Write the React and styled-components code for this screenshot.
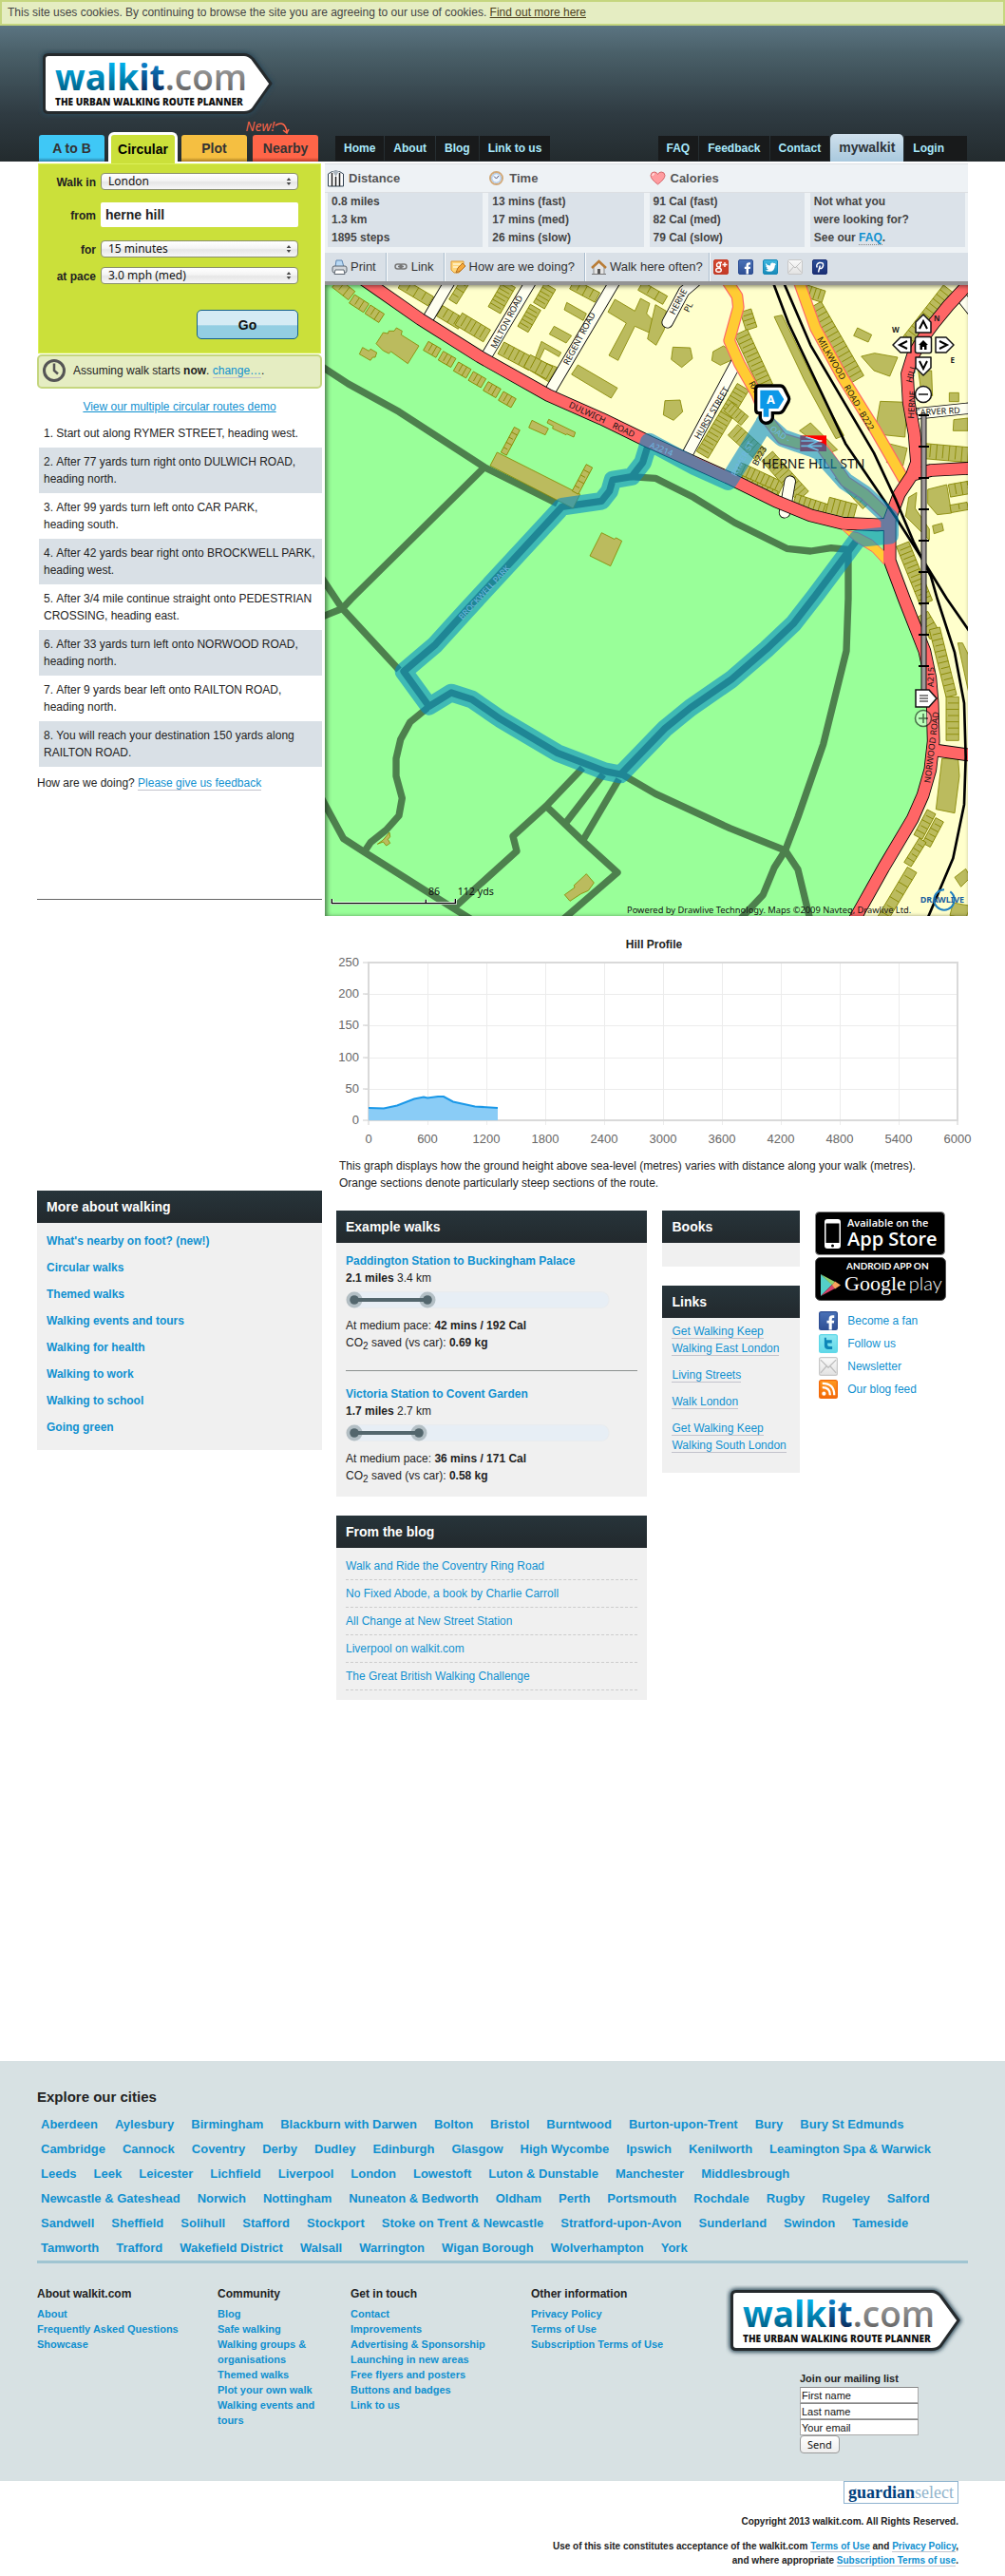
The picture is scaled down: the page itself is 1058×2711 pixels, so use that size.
import React from "react";
import styled, { createGlobalStyle, css } from "styled-components";

const sans = '"Liberation Sans", Arial, Helvetica, sans-serif';
const ui = '"Noto Sans", "Open Sans", sans-serif';
const blue = "#0f90d0";

const GlobalStyle = createGlobalStyle`
  *, *::before, *::after { box-sizing: border-box; }
  body { margin: 0; background: #fff; color: #222; font: 12px/18px ${sans}; }
  h2, h3, p, ul, ol { margin: 0; padding: 0; }
  ul, ol { list-style: none; }
  a { color: ${blue}; text-decoration: none; }
  svg { display: block; }
`;

const Container = styled.div`
  max-width: 980px;
  margin: 0 auto;
  @media (max-width: 1020px) { margin: 0 20px; }
`;

/* ---------- header ---------- */

const CookieBar = styled.p`
  padding: 2px 6px 3px;
  border: 2px solid #c5d67f;
  background: #e5edc2;
  color: #444;
  a { color: #4d3f1c; text-decoration: underline; }
`;

const Header = styled.header`
  background: linear-gradient(#5b7481, #4a6069 20%, #2f3b42 65%, #232b2e);
`;

const LogoLink = styled.a`
  display: block;
  width: 252px;
  margin-left: ${(p) => (p.$inset ? "1px" : "0")};
`;

const HeaderInner = styled(Container)`
  display: flex;
  flex-direction: column;
  padding-top: 24px;
`;

const NavRow = styled.div`
  display: flex;
  align-items: flex-end;
  justify-content: space-between;
  margin-top: 9px;
  height: 34px;
`;

const Tabs = styled.nav`
  position: relative;
  display: flex;
  align-items: flex-end;
  gap: 6px;
  width: 314px;
  padding-left: 2px;
`;

const Tab = styled.a`
  width: 69px;
  height: 28px;
  border-radius: 3px 3px 0 0;
  background: linear-gradient(${(p) => p.$color} 85%, ${(p) => p.$edge});
  color: #333;
  font: bold 14px/28px ${sans};
  text-align: center;
  ${(p) =>
    p.$active &&
    css`
      width: 73px;
      height: 33px;
      margin: 0 -2px -2px;
      position: relative;
      border: 3px solid #fff;
      border-bottom: 0;
      border-radius: 6px 6px 0 0;
      background: #cbe03a;
      color: #000;
      line-height: 30px;
    `}
`;

const NewNote = styled.span`
  position: absolute;
  right: 48px;
  bottom: 28px;
  display: flex;
  align-items: flex-end;
  color: #ff6548;
  font: italic 14px/18px "Open Sans", sans-serif;
`;

const MenuGroup = styled.nav`
  display: flex;
  align-items: flex-end;
  gap: 1px;
  margin-right: ${(p) => (p.$last ? "1px" : "auto")};
  margin-bottom: 1px;
`;

const MenuLink = styled.a`
  height: 26px;
  padding: 0 9px;
  background: #181a1b;
  color: #a9e9fb;
  font: bold 12px/26px ${sans};
  ${(p) => p.$wide && "padding-right: 24px;"}
`;

const AccountTab = styled.a`
  height: 29px;
  margin-bottom: -1px;
  padding: 0 9px;
  border-radius: 5px 5px 0 0;
  background: linear-gradient(#cfe0ec, #a9c9de);
  color: #2c3338;
  font: bold 14px/29px ${sans};
`;

/* ---------- main ---------- */

const Main = styled(Container)`
  display: grid;
  grid-template-columns: 300px minmax(0, 1fr);
  gap: 3px;
  padding: 2px 0 380px;
  @media (max-width: 760px) { grid-template-columns: minmax(0, 1fr); }
`;

const SearchForm = styled.form`
  display: grid;
  grid-template-columns: 60px 208px;
  column-gap: 5px;
  margin: 0 1px;
  padding: 9px 0 14px;
  border: 1px solid #dcf15a;
  background: #cbe03a;
  height: 200px;
  align-content: start;
`;

const FieldLabel = styled.label`
  height: ${(p) => p.$h};
  text-align: right;
  font-weight: bold;
  line-height: 20px;
  padding-top: ${(p) => p.$pad || "0"};
`;

const SelectWrap = styled.span`
  position: relative;
  height: 18px;
  svg { position: absolute; right: 6px; top: 4px; pointer-events: none; }
`;

const Select = styled.select`
  appearance: none;
  width: 100%;
  height: 18px;
  padding: 0 7px;
  border: 1px solid #8a8f6a;
  border-radius: 4px;
  background: linear-gradient(#fff, #f4f4f4 45%, #e6e6e6 55%, #f7f7f7);
  color: #111;
  font: 12px/16px ${ui};
`;

const PlaceInput = styled.input`
  width: 100%;
  height: 26px;
  margin: 0;
  padding: 0 5px;
  border: 0;
  border-radius: 2px;
  background: #fff;
  color: #222;
  font: bold 14px/26px ${sans};
`;

const GoButton = styled.button`
  grid-column: 2;
  justify-self: end;
  width: 107px;
  height: 31px;
  border: 1px solid #14608c;
  border-radius: 5px;
  background: linear-gradient(#d5ebf4 50%, #93cee2 55%, #93cee2);
  color: #111;
  font: bold 14px/28px ${sans};
`;

const TimeBar = styled.p`
  display: flex;
  align-items: center;
  gap: 8px;
  height: 36px;
  margin-top: 1px;
  padding: 0 4px 2px;
  border: 2px solid #c5d67f;
  border-radius: 5px;
  background: #e5edc2;
`;

const InlineLink = styled.a`
  border-bottom: 1px ${(p) => (p.$dotted ? "dotted #888" : "solid #c3c3cc")};
`;

const DemoLink = styled.p`
  margin-top: 10px;
  text-align: center;
  a { text-decoration: underline; }
`;

const Directions = styled.ol`
  margin: 4px 0 0 2px;
  list-style: decimal inside;
`;

const Step = styled.li`
  padding: 6px 0 6px 5px;
  background: ${(p) => (p.$alt ? "#d9e0e6" : "transparent")};
`;

const FeedbackLine = styled.p`
  padding-bottom: 113px;
  margin-top: 8px;
  border-bottom: 1px solid #666;
`;

const Panel = styled.section`
  margin-top: ${(p) => p.$top || "0"};
  background: #f0f0f0;
`;

const PanelTitle = styled.h2`
  padding: 0 10px;
  background: linear-gradient(#27343a, #22292d);
  color: #fff;
  font: bold 14px/34px ${sans};
`;

const PanelBody = styled.div`
  padding: ${(p) => p.$pad};
`;

const TopicList = styled.ul`
  font-weight: bold;
  li { height: 28px; line-height: 18px; }
`;

const StatsTable = styled.table`
  width: 100%;
  table-layout: fixed;
  border-collapse: separate;
  border-spacing: 0;
  border-bottom: 6px solid #eef2f5;
  background: #eef2f5;
  color: #444;
  font-weight: bold;
`;

const StatHead = styled.th`
  height: 31px;
  padding: 0 3px;
  border: solid #dcdfe2;
  border-width: 1px 0;
  text-align: left;
  font-size: 13px;
  color: #555;
  span { display: flex; align-items: center; gap: 5px; }
`;

const StatCell = styled.td`
  height: 19px;
  padding: 0 4px;
  border: solid #eef2f5;
  border-width: 0 3px;
  background: #dbe2e9;
  line-height: 19px;
`;

const Toolbar = styled.div`
  display: flex;
  align-items: center;
  height: 34px;
  padding-left: 1px;
  border-bottom: 4px solid #939393;
  background: #d9e0e7;
  font-size: 13px;
`;

const Tool = styled.a`
  display: flex;
  align-items: center;
  gap: 3px;
  height: 30px;
  padding: 0 ${(p) => p.$right || "10px"} 0 6px;
  border-right: 1px solid #a9bccd;
  box-shadow: 1px 0 #fff;
  color: #333;
`;

const ShareLinks = styled.div`
  display: flex;
  gap: 10px;
  padding-left: 4px;
`;

/* ---------- map ---------- */

const MapFrame = styled.div`
  position: relative;
  overflow: hidden;
  &::after {
    content: "";
    position: absolute;
    inset: 0;
    box-shadow: inset 2px 1px 5px rgba(0, 0, 0, 0.55);
    pointer-events: none;
  }
`;

const MapControls = styled.div`
  position: absolute;
  top: 30px;
  right: 14px;
  width: 66px;
  display: flex;
  flex-direction: column;
  align-items: center;
  z-index: 1;
`;

const Compass = styled.div`
  display: grid;
  grid-template-columns: repeat(3, 22px);
  grid-template-rows: repeat(3, 22px);
  margin-bottom: 8px;
  font: bold 8px/10px ${ui};
`;

const MapButton = styled.button`
  padding: 0;
  border: 0;
  background: none;
  width: 22px;
  height: 22px;
  ${(p) => p.$area && `grid-area: ${p.$area};`}
`;

const CompassMark = styled.span`
  grid-area: ${(p) => p.$area};
  justify-self: ${(p) => p.$x};
  align-self: ${(p) => p.$y};
`;

const ZoomTrack = styled.div`
  position: relative;
  margin: 9px 0 0 5px;
  input {
    position: absolute;
    inset: 0;
    width: 24px;
    height: 310px;
    margin: 0;
    opacity: 0;
    writing-mode: vertical-lr;
  }
`;

/* ---------- right column ---------- */

const ChartTitle = styled.h2`
  margin: 21px 0 1px 16px;
  text-align: center;
  font: bold 12px/18px ${sans};
`;

const ChartSvg = styled.svg`
  width: 100%;
  overflow: visible;
`;

const ChartNote = styled.p`
  padding: 10px 0 0 15px;
`;

const LowerGrid = styled.div`
  display: grid;
  grid-template-columns: minmax(0, 328fr) minmax(0, 145fr) minmax(0, 161fr);
  gap: 16px;
  margin: 20px 0 0 12px;
  align-items: start;
`;

const Walk = styled.div`
  & + & { margin-top: 20px; padding-top: 15px; border-top: 1px solid #8b908f; }
  svg { margin: 5px 0 9px; }
  sub { font-size: 10px; line-height: 0; }
`;

const BlogList = styled.ul`
  li { height: 29px; padding-top: 5px; border-bottom: 1px dashed #ccc; }
`;

const LinkList = styled.ul`
  display: grid;
  gap: 10px;
`;

const Badges = styled.div`
  display: grid;
  gap: 2px;
  padding-top: 1px;
  width: 138px;
`;

const SocialList = styled.ul`
  display: grid;
  gap: 4px;
  margin: 11px 0 0 4px;
  a { display: flex; align-items: center; gap: 10px; height: 20px; }
`;

/* ---------- footer ---------- */

const FooterBand = styled.footer`
  background: #d7e1e3;
  padding: 29px 0 29px;
  a { font-weight: bold; }
`;

const CitiesTitle = styled.h2`
  margin-bottom: 7px;
  font: bold 15px/18px ${sans};
`;

const CityRow = styled.ul`
  display: flex;
  flex-wrap: wrap;
  column-gap: 18px;
  padding-left: 4px;
  font-size: 13px;
  line-height: 26px;
`;

const FooterGrid = styled.div`
  display: grid;
  grid-template-columns: 190px 140px 190px 205px minmax(0, 1fr);
  border-top: 3px solid #a0c5d2;
  padding-top: 23px;
  @media (max-width: 900px) { grid-template-columns: repeat(auto-fill, minmax(190px, 1fr)); }
`;

const FooterColumn = styled.div`
  padding-right: 24px;
  font-size: 11px;
  line-height: 16px;
  white-space: ${(p) => (p.$wrap ? "normal" : "nowrap")};
  h3 { margin-bottom: 4px; font: bold 12px/18px ${sans}; }
`;

const MailForm = styled.form`
  display: flex;
  flex-direction: column;
  align-items: flex-start;
  margin: 13px 0 0 78px;
  h3 { font: bold 11px/18px ${sans}; }
`;

const MailInput = styled.input`
  width: 125px;
  height: 17px;
  margin: 0;
  padding: 0 1px;
  border: 1px solid #aaa;
  border-top-color: #888;
  background: #fff;
  color: #111;
  font: 11px/15px ${sans};
`;

const SendButton = styled.button`
  height: 19px;
  padding: 0 7px;
  border: 1px solid #999;
  border-radius: 4px;
  background: linear-gradient(#fff, #eee);
  color: #111;
  font: 11px/16px ${ui};
`;

const Legal = styled(Container)`
  display: flex;
  flex-direction: column;
  align-items: flex-end;
  padding: 0 10px 8px 0;
  text-align: right;
  font: bold 10px/15px ${sans};
  p { margin-top: 11px; }
`;

const Guardian = styled.a`
  padding: 0 4px;
  border: 1px solid #8fb3cf;
  color: #00407c;
  font: bold 18px/22px "Liberation Serif", serif;
  span { color: #92b4cc; font-weight: normal; }
`;

/* ---------- drawings ---------- */

function Logo({ id }) {
  const stops = (name, a, b) => (
    <linearGradient id={id + name} gradientUnits="userSpaceOnUse" x1="0" y1="14" x2="0" y2="45">
      <stop offset="0" stopColor={a} />
      <stop offset="1" stopColor={b} />
    </linearGradient>
  );
  const shape = "M11 6.500H217C221 6.500 223 8 226 11L245 37L226 64C223 67 221 67.500 217 67.500H11Q6.500 67.500 6.500 63V11Q6.500 6.500 11 6.500Z";
  return (
    <svg width="252" height="76" viewBox="0 0 252 76" role="img" aria-label="walkit.com">
      <defs>
        {stops("a", "#00b4f0", "#005f86")}
        {stops("b", "#0a84cf", "#0a2c5c")}
        {stops("c", "#a8a8a8", "#666")}
        <filter id={id + "s"} x="-10%" y="-20%" width="120%" height="140%">
          <feGaussianBlur stdDeviation="2" />
        </filter>
      </defs>
      <path d={shape} fill="none" stroke="#2c4656" strokeWidth="6" filter={`url(#${id}s)`} />
      <path d={shape} fill="#fff" stroke="#252a2d" strokeWidth="3" strokeLinejoin="round" />
      <text x="18" y="44" fontFamily="Open Sans, sans-serif" fontWeight="700" fontSize="37">
        <tspan fill={`url(#${id}a)`}>walk</tspan>
        <tspan fill={`url(#${id}b)`}>it</tspan>
        <tspan fill={`url(#${id}c)`} fontWeight="600">.com</tspan>
      </text>
      <text x="18" y="60" fontFamily="Open Sans, sans-serif" fontWeight="800" fontSize="10" fill="#111">
        THE URBAN WALKING ROUTE PLANNER
      </text>
    </svg>
  );
}

const tiles = {
  google: ["#d6492f", "#c33a26"],
  facebook: ["#4a72b8", "#2f4f94"],
  twitter: ["#3fb8e0", "#1789b8"],
  tlight: ["#8fe8f2", "#5fd8e8"],
  mail: ["#fafafa", "#e2e2e2"],
  pin: ["#2a4f98", "#1b2f74"],
  rss: ["#ff9a1f", "#f36a0a"],
};

function SocialIcon({ kind, size = 16 }) {
  const [a, b] = tiles[kind];
  const id = `tile-${kind}-${size}`;
  return (
    <svg width={size} height={size} viewBox="0 0 16 16" aria-hidden="true">
      <linearGradient id={id} x1="0" y1="0" x2="0" y2="1">
        <stop stopColor={a} />
        <stop offset="1" stopColor={b} />
      </linearGradient>
      <rect x=".5" y=".5" width="15" height="15" rx="1.500" fill={`url(#${id})`} stroke={kind === "mail" ? "#c8c8c8" : b} />
      {kind === "google" && (
        <g fill="none" stroke="#fff" strokeWidth="1.400">
          <ellipse cx="5.500" cy="5.800" rx="2" ry="2.200" />
          <path d="M5 3.300H9M7.300 7.500L6.500 9" />
          <ellipse cx="5.500" cy="11.200" rx="2.800" ry="2" />
          <path d="M12 3V8M9.500 5.500H14.500" />
        </g>
      )}
      {kind === "facebook" && <path d="M8.500 15.500V10H6.800V7.800H8.500V6.300Q8.500 3.300 11.500 3.300H13V5.600H12Q11 5.600 11 6.600V7.800H13L12.700 10H11V15.500Z" fill="#fff" />}
      {kind === "twitter" && <path d="M3 4Q5 6.500 8 6.500Q7.800 3.500 10.300 3.400Q11.300 3.400 12 4.200L13.600 3.700L13 5.100L14 5L12.800 6.400Q12.600 12.600 7 12.800Q4.500 12.800 2.700 11.600Q4.800 11.600 6 10.600Q4.400 10.200 3.900 8.900H5Q3.300 8.200 3.200 6.600L4.200 6.900Q2.700 5.500 3 4Z" fill="#fff" />}
      {kind === "tlight" && <path d="M6.300 3V5H11V7.600H7.300V9.200Q7.300 10.300 8.600 10.300H11.300V12.800H8Q4.700 12.800 4.700 9.500V3Z" fill="#0c86b8" />}
      {kind === "mail" && <path d="M1.500 2.500L8 9L14.500 2.500M1.500 13.500L6.300 8M14.500 13.500L9.700 8" fill="none" stroke="#bdbdbd" />}
      {kind === "pin" && <path d="M6.500 13.500L8.300 6.500M5.200 8.500Q3.700 5 7.500 3.500Q12 2.800 11.600 6.500Q10.700 10.200 7.700 9.200" fill="none" stroke="#fff" strokeWidth="1.500" />}
      {kind === "rss" && (
        <g fill="none" stroke="#fff" strokeWidth="1.800">
          <path d="M3 6.500Q9.500 6.500 9.500 13M3 3Q13 3 13 13" />
          <circle cx="4.300" cy="11.700" r=".8" fill="#fff" />
        </g>
      )}
    </svg>
  );
}

const PrintIcon = () => (
  <svg width="17" height="17" viewBox="0 0 17 17" aria-hidden="true">
    <path d="M4 8L5 1H11L13 8Z" fill="#b9d9f5" stroke="#5d85b0" />
    <rect x="1" y="7" width="15" height="7" rx="2" fill="#d3d7dc" stroke="#5d6670" />
    <path d="M4 11H13L14 15.500H3Z" fill="#fff" stroke="#5d6670" />
  </svg>
);
const ChainIcon = () => (
  <svg width="17" height="10" viewBox="0 0 17 10" fill="none" stroke="#777" strokeWidth="1.500" aria-hidden="true">
    <rect x="3" y="2" width="7" height="5" rx="2.500" />
    <rect x="8" y="2" width="7" height="5" rx="2.500" />
    <path d="M6 4.500H12" />
  </svg>
);
const NoteIcon = () => (
  <svg width="17" height="17" viewBox="0 0 17 17" aria-hidden="true">
    <path d="M1 2H14V9L9 14H4L1 11Z" fill="#ffd67a" stroke="#e0982f" />
    <path d="M3 5H11M3 8H8" stroke="#fff3cf" strokeWidth="1.500" />
    <path d="M6 14L8 9L13 4L16 7L11 12Z" fill="#f5a93c" stroke="#b36f1f" />
  </svg>
);
const HomeIcon = () => (
  <svg width="17" height="17" viewBox="0 0 17 17" aria-hidden="true">
    <path d="M3 8V15.500H14V8L8.500 3Z" fill="#e5e5e5" stroke="#888" />
    <rect x="7" y="10" width="3" height="5.500" fill="#555" />
    <path d="M1 9L8.500 2L16 9" fill="none" stroke="#b97c35" strokeWidth="2.400" />
    <path d="M1 15.500H16" stroke="#777" />
  </svg>
);
const DistanceIcon = () => (
  <svg width="17" height="18" viewBox="0 0 17 18" aria-hidden="true">
    <path d="M.500 4Q4 1 8.500 1T16.500 4V17H.500Z" fill="#fff" stroke="#2f4050" />
    <path d="M4.500 3V17M8.500 7V17M12.500 3V17" stroke="#222" strokeWidth="1.500" />
    <path d="M5 1H12L8.500 7Z" fill="#aab4bd" />
  </svg>
);
const TimeIcon = () => (
  <svg width="17" height="17" viewBox="0 0 17 17" aria-hidden="true">
    <circle cx="8.500" cy="8.500" r="6.500" fill="#fff" stroke="#d1a878" strokeWidth="2" />
    <circle cx="8.500" cy="8.500" r="4.800" fill="#eef6ff" stroke="#8fb4e0" />
    <path d="M6 6.500L8.500 9L11 6" fill="none" stroke="#557" />
  </svg>
);
const HeartIcon = () => (
  <svg width="17" height="17" viewBox="0 0 17 17" aria-hidden="true">
    <path d="M8.500 15Q1 9.500 1 5.500Q1.500 2 4.800 2Q7.500 2 8.500 4.500Q9.500 2 12.200 2Q15.500 2 16 5.500Q16 9.500 8.500 15Z" fill="#ff9ca0" stroke="#d3686c" />
    <path d="M3 6Q3 4 5 3.800" stroke="#ffdcdc" strokeWidth="1.500" fill="none" />
  </svg>
);
const ClockIcon = () => (
  <svg width="24" height="24" viewBox="0 0 24 24" fill="none" stroke="#555" aria-hidden="true">
    <circle cx="12" cy="12" r="10.500" strokeWidth="3" />
    <path d="M12 4.500V12L16 15.500" strokeWidth="2.500" />
  </svg>
);
const SelectArrows = () => (
  <svg width="8" height="10" viewBox="0 0 8 10" aria-hidden="true">
    <path d="M4 1L6.300 4H1.700ZM4 9L1.700 6H6.300Z" fill="#444" />
  </svg>
);

function Distance({ end }) {
  return (
    <svg width="281" height="18" viewBox="0 0 281 18" role="img" aria-label="Route length">
      <rect x="1" y=".5" width="276" height="17" rx="8" fill="#e7eef5" stroke="#e9ecee" />
      <path d={`M9 9H${end}`} stroke="#53666d" strokeWidth="4" />
      {[9, end].map((x) => (
        <g key={x} fill="#53666d">
          <circle cx={x} cy="9" r="8.500" opacity=".35" />
          <circle cx={x} cy="9" r="4.800" />
        </g>
      ))}
    </svg>
  );
}

function AppStoreBadge() {
  return (
    <svg width="138" height="46" viewBox="0 0 138 46" role="img" aria-label="Available on the App Store">
      <rect x=".5" y=".5" width="136" height="45" rx="4" stroke="#888" />
      <rect x="10" y="8" width="17" height="31" rx="3" fill="#fff" />
      <path d="M11.500 12.500H25.500V33H11.500Z" />
      <circle cx="18.500" cy="36" r="1.500" />
      <text x="34" y="16" fill="#fff" fontFamily="Open Sans, sans-serif" fontSize="11" fontWeight="600">Available on the</text>
      <text x="34" y="36" fill="#fff" fontFamily="Open Sans, sans-serif" fontSize="20" fontWeight="600">App Store</text>
    </svg>
  );
}

function GooglePlayBadge() {
  return (
    <svg width="138" height="46" viewBox="0 0 138 46" role="img" aria-label="Android app on Google play">
      <rect x=".5" y=".5" width="137" height="45" rx="5" stroke="#555" />
      <path d="M6 18L18 29L6 41Z" fill="#54cfc8" />
      <path d="M6 18L21 26L18 29.500Z" fill="#8fd06c" />
      <path d="M6 41L21 33L18 29Z" fill="#d8416a" />
      <path d="M18 29.500L21 25.500L27 29.500L21 33.500Z" fill="#f7a35c" />
      <text x="33" y="13" fill="#fff" fontFamily="Lato, sans-serif" fontSize="10" fontWeight="700">ANDROID APP ON</text>
      <text x="31" y="35" fill="#fff" fontFamily="Liberation Serif, serif" fontSize="22" fontWeight="400">
        Google<tspan dx="3" fontFamily="Lato, sans-serif" fontSize="20" fontWeight="300">play</tspan>
      </text>
    </svg>
  );
}

/* ---------- route map (three drawing units to a pixel) ---------- */

const R = 1050;
const D = 1020;
const line = (pts, dx = 0, dy = 0) =>
  "M" + pts.map(([x, y]) => `${x + dx} ${y + dy}`).join("L");

const dulwich = line([[120, 7], [155, 31], [308, 138], [495, 256], [712, 378], [880, 452], [1030, 525], [1180, 593], [1290, 643], [1430, 712], [1540, 757], [1640, 782], [1750, 787], [1790, 785]]);
const hernehill = line([[1000, 12], [985, 30], [925, 95], [880, 150], [850, 190], [812, 255], [795, 310], [800, 400], [818, 500], [825, 590], [810, 630], [770, 690], [740, 770], [740, 900], [785, 1020], [850, 1185], [868, 1270], [875, 1350], [878, 1470], [868, 1560], [845, 1640], [812, 1715], [720, 1870], [635, 2022], [620, 2050]], R);
const branches = [line([[815, 628], [870, 615], [1000, 608]], R), line([[880, 478], [1000, 495]], R, D)];

const streets = [
  line([[400, 20], [334, 132]]),
  line([[656, 20], [520, 248]]),
  line([[921, 20], [720, 360]]),
  line([[1305, 275], [1145, 575]]),
  line([[1175, 20], [1140, 50], [1088, 148]]),
  line([[1475, 650], [1458, 748]]),
  line([[1868, 437], [2050, 418]]),
  line([[2010, 60], [2050, 110]]),
];

const oranges = [
  line([[225, 15], [258, 65], [262, 100], [233, 205], [265, 278], [320, 375], [350, 450], [400, 515], [450, 530], [520, 535], [560, 590], [600, 650], [660, 690], [735, 760]], R),
  line([[450, 10], [505, 165], [590, 320], [690, 480], [785, 645]], R),
];

const rails = [
  line([[369, 15], [420, 150], [600, 530], [760, 765], [840, 890], [920, 1020], [1000, 1135]], R),
  line([[402, 15], [490, 220], [690, 560], [760, 710], [815, 840], [870, 950], [890, 1020], [945, 1190], [975, 1350], [980, 1520], [975, 1670], [940, 1840], [855, 2040]], R),
];

const paths = [
  line([[-10, 283], [80, 342], [240, 430], [510, 605], [740, 720]]),
  line([[510, 605], [90, 1020], [60, 1052], [-10, 1080]]),
  line([[-10, 945], [60, 1050], [240, 1245]]),
  line([[970, 635], [1050, 640], [1170, 700], [1300, 780], [1465, 862], [1540, 870], [1605, 860], [1660, 865]]),
  line([[1659, 860], [1659, 1020], [1653, 1185], [1580, 1480], [1500, 1710], [1460, 1815], [1425, 1870], [1390, 1955], [1310, 2040]]),
  line([[1460, 1815], [1500, 1875], [1540, 2040]]),
  line([[940, 1572], [1050, 1636], [1285, 1745], [1460, 1815]]),
  line([[330, 1365], [275, 1410], [245, 1465], [231, 1525], [231, 1580], [250, 1650], [240, 1705], [200, 1750], [150, 1790], [130, 1820]]),
  line([[-10, 1640], [65, 1778], [130, 1820], [400, 1990], [480, 2040]]),
  line([[820, 1555], [705, 1675], [600, 1770], [612, 1817], [415, 1995]]),
  line([[885, 1575], [765, 1730]]),
  line([[935, 1590], [820, 1785]]),
  line([[705, 1675], [820, 1785], [930, 1885], [750, 2040]]),
];

const parkRoute = [[1030, 525], [1010, 590], [975, 635], [915, 645], [905, 680], [880, 712], [755, 730], [450, 1060], [355, 1165], [255, 1250], [335, 1360], [405, 1317], [470, 1338], [560, 1400], [740, 1507], [890, 1565], [940, 1575], [1080, 1430], [1160, 1365], [1290, 1275], [1400, 1180], [1485, 1100], [1555, 1010], [1690, 830]];
const walkRoute = [[1395, 465], [1280, 650], [1175, 603], ...parkRoute, [1790, 820], [1790, 765], [1710, 690], [1650, 650], [1605, 600], [1568, 555], [1540, 543], [1500, 530], [1450, 512], [1395, 462]];

const blocks = [
  "190,180 205,183 208,175 225,175 232,165 250,175 247,187 303,222 268,278 215,240 208,246 190,237 168,215",
  "125,227 145,238 150,232 170,243 165,258 157,258 150,268 115,248",
  "660,457 712,483 702,503 650,480",
  "713,454 797,495 792,510 770,500 768,503 725,483 727,475 708,465",
  "550,558 812,690 790,735 528,600",
  "880,812 920,832 926,828 944,838 908,917 843,885",
  "770,85 832,120 822,142 762,108",
  "730,160 785,190 768,213 715,185",
  "805,282 930,355 910,387 785,312",
  "922,75 985,112 1003,72 1032,88 1022,120 1050,150 1030,180 985,160 932,268 903,252 958,150 900,115",
  "690,208 752,243 745,256 700,230 682,268 740,290 712,335 655,300",
  "1105,226 1160,228 1167,262 1133,290 1100,265",
  "1080,395 1128,393 1136,430 1107,457 1075,440",
  "1232,240 1265,222 1290,240 1295,265 1255,283 1228,268",
  "1050,92 1084,112 1078,170 1052,220 1025,200",
  "1425,130 1450,125 1550,330 1645,505 1620,515 1520,330",
  "1688,165 1733,187 1722,210 1676,190",
  "1700,255 1742,245 1815,258 1790,318 1740,300",
  "1760,397 1845,400 1838,510 1742,500",
  "1785,530 1845,545 1832,600 1780,590",
  "1880,300 1922,300 1925,380 1890,370",
  "1978,370 2008,370 2008,398 1978,398",
  "1992,455 2037,450 2037,490 1990,490",
  "1910,675 1970,660 1985,750 1940,755 1910,720",
  "1850,700 1875,685 1870,735 1915,800 1915,835 1840,760",
  "1925,790 1955,782 1960,805 1930,815",
  "2005,1160 2020,1160 2045,1210 2040,1320",
  "190,1782 210,1758 212,1772 205,1780 212,1792 200,1800 190,1788 172,1795",
  "832,1889 856,1917 838,1942 815,1952 780,1975 763,1955 795,1932 793,1925",
  "1955,1525 2006,1525 2010,1580 1995,1697 1936,1685",
  "1995,1900 2030,1873 2045,1900 2015,1930",
  "1990,1980 2045,1990 2030,2030 1980,2020",
  "1505,490 1540,465 1625,550 1600,560",
];

/* x, y, angle, length, depth, houses */
const terraces = [
  [50, 10, 38, 65, 34, 3], [100, 60, 33, 54, 32, 3], [150, 93, 33, 52, 32, 3],
  [333, 208, 30, 46, 32, 3], [380, 239, 30, 46, 32, 3], [428, 273, 30, 46, 32, 3],
  [475, 303, 30, 46, 32, 3], [522, 335, 30, 46, 32, 3], [570, 366, 30, 46, 32, 3],
  [255, 10, 31, 110, 34, 4], [378, 95, 31, 80, 38, 4], [440, 118, 31, 104, 44, 6],
  [398, 75, -58, 85, 28, 4], [522, 98, -60, 95, 44, 7], [615, 160, -60, 80, 38, 6], [665, 85, -60, 70, 40, 5],
  [572, 210, 28, 110, 42, 6], [655, 250, 28, 80, 44, 4], [795, 12, 28, 90, 34, 4], [1010, 20, 30, 90, 30, 3],
  [562, 558, -62, 90, 20, 5], [787, 680, -62, 95, 22, 5],
  [1352, 105, 72, 60, 36, 4], [1340, 170, 65, 190, 44, 12], [1573, 82, 60, 270, 44, 15],
  [1815, 215, -52, 235, 38, 13], [1530, 30, 18, 60, 38, 4],
  [1180, 555, -59, 250, 42, 17], [1290, 400, 40, 70, 36, 5], [1310, 470, 42, 120, 46, 7],
  [1320, 590, 25, 150, 46, 9], [1420, 555, 48, 170, 46, 11], [1310, 625, 24, 140, 36, 8],
  [1495, 690, 18, 130, 46, 8], [1600, 700, 15, 90, 52, 5], [1640, 620, 48, 130, 30, 6],
  [1900, 530, 5, 140, 48, 7], [1975, 660, -10, 80, 40, 4], [1980, 725, -10, 55, 24, 2],
  [1850, 840, 68, 200, 42, 13], [1910, 1060, 60, 80, 38, 4], [1948, 1110, 76, 220, 34, 12],
  [2008, 1330, 90, 138, 40, 7], [1935, 1700, 118, 90, 30, 5], [1960, 1725, 118, 90, 28, 5],
  [1905, 1790, 122, 90, 26, 5], [1875, 1885, 121, 190, 34, 7],
];

function Terrace({ spec }) {
  const [x, y, angle, w, d, n] = spec;
  let cuts = "";
  for (let i = 1; i < n; i += 1) cuts += `M${(w * i) / n} 0V${d - (i % 2) * 6}`;
  return (
    <g transform={`translate(${x} ${y}) rotate(${angle})`}>
      <path d={`M0 0H${w}V${d}H0Z${cuts}`} />
    </g>
  );
}

const roadNames = [
  ["MILTON  ROAD", 545, 232, -62], ["REGENT  ROAD", 775, 284, -62], ["DULWICH", 775, 415, 25], ["ROAD", 912, 480, 25],
  ["HERNE", 1110, 125, -62], ["PL", 1155, 118, -62], ["HURST  STREET", 1188, 518, -59], ["MILKWOOD", 1560, 200, 60],
  ["ROAD  -  B222", 1645, 352, 60], ["RA", 1344, 340, 62], ["HERNE", 1866, 452, -86], ["HILL", 1860, 340, -75],
  ["CARVER  RD", 1870, 442, -3], ["B223", 1372, 602, -62], ["NORWOOD  ROAD", 1918, 1603, -83], ["A215", 1928, 1300, -88],
];
const routeNames = [
  ["A2214", 1030, 542, 22], ["RYMER  ST", 1305, 636, -62], ["OAD  -", 1410, 488, 35], ["BROCKWELL  PARK", 440, 1088, -47],
];

const RouteMap = () => (
  <svg width="100%" viewBox="6 30 2031 1992" role="img" aria-label="Map of the walking route around Herne Hill">
    <path d="M0 0H2050V2050H0Z" fill="#9f9" />
    <path
      d="M120 0L155 31L308 138L495 256L712 378L880 452L1030 525L1180 593L1290 643L1430 712L1540 757L1640 782L1790 787V900L1835 1020L1900 1185L1925 1350L1928 1470L1895 1640L1862 1715L1770 1870L1670 2050H2060V0Z"
      fill="#ffc"
    />
    <g fill="none" stroke="#4d804d" strokeWidth="22" strokeLinejoin="round">
      {paths.map((d) => <path key={d} d={d} />)}
      <path d={line(parkRoute)} />
    </g>
    <g fill="#bbbb5e" stroke="#878700" strokeWidth="2.500">
      {blocks.map((b) => <polygon key={b} points={b} />)}
      {terraces.map((t) => <Terrace key={t.join()} spec={t} />)}
    </g>
    <g fill="none" strokeLinejoin="round">
      {streets.map((d) => <path key={d} d={d} stroke="#000" strokeWidth="37" strokeLinecap="round" />)}
      {streets.map((d) => <path key={d} d={d} stroke="#fffff0" strokeWidth="32" strokeLinecap="round" />)}
      {oranges.map((d) => <path key={d} d={d} stroke="#f66" strokeWidth="38" />)}
      {oranges.map((d) => <path key={d} d={d} stroke="#fc3" strokeWidth="31" />)}
      {[dulwich, hernehill, ...branches].map((d) => <path key={d} d={d} stroke="#000" strokeWidth="41" />)}
      {[dulwich, hernehill, ...branches].map((d) => <path key={d} d={d} stroke="#f66" strokeWidth="36" />)}
      <path d="M1640 802L1690 812L1735 835L1772 870V912L1735 872L1680 838Z" fill="#fc3" stroke="#f66" strokeWidth="3" />
      {rails.map((d) => <path key={d} d={d} stroke="#000" strokeWidth="8" />)}
    </g>
    <rect x="1507" y="505" width="83" height="50" fill="#f00" />
    <path d="M1510 522H1576M1510 538H1576M1525 510L1565 522L1530 538L1565 552" fill="none" stroke="#fff" strokeWidth="5" />
    <g fontFamily="Noto Sans, sans-serif" fontSize="27" fill="#111" style={{ whiteSpace: "pre" }}>
      {roadNames.map(([t, x, y, a]) => (
        <text key={t + x} transform={`translate(${x} ${y}) rotate(${a})`}>{t}</text>
      ))}
      <text x="1386" y="608" fontSize="42">HERNE HILL STN</text>
    </g>
    <path d={line(walkRoute)} fill="none" stroke="#008ac8" strokeOpacity=".59" strokeWidth="56" strokeLinejoin="round" strokeLinecap="round" />
    <g fontFamily="Noto Sans, sans-serif" fontSize="26" fill="#6fb8e0" style={{ whiteSpace: "pre" }}>
      {routeNames.map(([t, x, y, a]) => (
        <text key={t} transform={`translate(${x} ${y}) rotate(${a})`}>{t}</text>
      ))}
    </g>
    <path d="M1376 348H1444Q1452 348 1457 356L1471 384Q1474 391 1470 398L1454 426Q1448 434 1440 434H1420V450Q1416 466 1398 466Q1384 464 1381 450V434H1376Q1367 434 1367 424V358Q1367 348 1376 348Z" fill="#fff" stroke="#000" strokeWidth="10" />
    <path d="M1381 362H1438L1456 391L1438 420H1408V446H1391V420H1381Z" fill="#0c98e8" />
    <text x="1401" y="406" fontFamily="Noto Sans, sans-serif" fontWeight="700" fontSize="38" fill="#fff">A</text>
    <g fontFamily="Noto Sans, sans-serif" fill="#111">
      <path d="M28 1968V1982H418V1968M325 1970V1982" fill="none" stroke="#fff" strokeWidth="8" />
      <path d="M28 1968V1982H418V1968M325 1970V1982" fill="none" stroke="#000" strokeWidth="4" />
      <text x="333" y="1956" fontSize="32">86</text>
      <text x="425" y="1956" fontSize="32">112 yds</text>
      <text x="1858" y="2012" textAnchor="end" fontSize="28">Powered by Drawlive Technology. Maps ©2009 Navteq, Drawlive Ltd.</text>
      <circle cx="1962" cy="1971" r="32" fill="none" stroke="#1f7fc0" strokeWidth="6" strokeDasharray="150 20" />
      <text x="1886" y="1980" fontSize="27" fontWeight="700" fill="#1b5fa0">DRAWLIVE</text>
    </g>
  </svg>
);

function ArrowButton({ label, area, turn }) {
  return (
    <MapButton type="button" aria-label={label} $area={area}>
      <svg width="22" height="22" viewBox="-11 -11 22 22">
        <g transform={`rotate(${turn})`}>
          <path d="M-8 9V-2L0 -10L8 -2V9Z" fill="#fff" stroke="#111" strokeWidth="1.500" strokeLinejoin="round" />
          <path d="M-4 5L0 -3L4 5" fill="none" stroke="#000" strokeWidth="2" />
        </g>
      </svg>
    </MapButton>
  );
}

function ZoomButton({ plus }) {
  return (
    <MapButton type="button" aria-label={plus ? "Zoom in" : "Zoom out"}>
      <svg width="22" height="22" viewBox="-11 -11 22 22" opacity={plus ? 0.6 : 1}>
        <circle r="8.500" fill={plus ? "#fff8" : "#fff"} stroke="#111" strokeWidth="1.500" />
        <path d={plus ? "M-5 0H5M0 -5V5" : "M-5 0H5"} stroke="#111" strokeWidth="1.500" />
      </svg>
    </MapButton>
  );
}

const Controls = () => (
  <MapControls>
    <Compass>
      <ArrowButton label="Move north" area="1 / 2" turn={0} />
      <ArrowButton label="Move west" area="2 / 1" turn={-90} />
      <MapButton type="button" aria-label="Centre the map" $area="2 / 2">
        <svg width="22" height="22" viewBox="-11 -11 22 22">
          <rect x="-8.500" y="-8.500" width="17" height="17" rx="2" fill="#fff" stroke="#111" strokeWidth="1.500" />
          <path d="M-5 0L0 -5L5 0H3.500V5H1V2H-1V5H-3.500V0Z" />
        </svg>
      </MapButton>
      <ArrowButton label="Move east" area="2 / 3" turn={90} />
      <ArrowButton label="Move south" area="3 / 2" turn={180} />
      <CompassMark $area="1 / 3" $x="start" $y="start">N</CompassMark>
      <CompassMark $area="1 / 1" $x="start" $y="end">W</CompassMark>
      <CompassMark $area="3 / 3" $x="end" $y="start">E</CompassMark>
    </Compass>
    <ZoomButton />
    <ZoomTrack>
      <svg width="28" height="310" viewBox="0 0 28 310" aria-hidden="true">
        <rect x="9" y="1" width="5" height="300" fill="#a09a9a" stroke="#111" />
        <path d={Array.from({ length: 9 }, (_, i) => `M6 ${2 + i * 33}H17`).join("")} stroke="#000" strokeWidth="2" />
        <path d="M3 291H17L25 300L17 309H3Z" fill="#fff" stroke="#111" strokeWidth="1.500" />
        <path d="M7 297H16M7 300H16M7 303H16" stroke="#111" />
      </svg>
      <input type="range" aria-label="Zoom level" min="0" max="9" defaultValue="9" />
    </ZoomTrack>
    <ZoomButton plus />
  </MapControls>
);

const profile = "M388 1166L404 1166.500L418 1163.500L436 1156.500L446 1154.500L450 1155.500L461 1154L467 1154L477 1159.500L500 1164.500L524 1166";

const HillChart = () => (
  <ChartSvg viewBox="342 1004 677 204" role="img" aria-label="Ground height along the walk">
    <g stroke="#ececec" strokeWidth="1">
      {[1, 2, 3, 4, 5, 6, 7, 8, 9].map((i) => <path key={i} d={`M${388.5 + i * 62} 1013V1184`} />)}
      {[1, 2, 3, 4].map((i) => <path key={i} d={`M384 ${Math.round(1179 - i * 33.2) + 0.5}H1008`} />)}
    </g>
    <path d="M382 1179H388M382 1146H388M382 1113H388M382 1079H388M382 1046H388M382 1013H388M388 1179V1184M1008 1179V1184" stroke="#ccc" />
    <rect x="388" y="1013" width="620" height="166" fill="none" stroke="#d9d9d9" strokeWidth="2" />
    <path d={profile + "V1179H388Z"} fill="#8accf6" />
    <path d={profile} fill="none" stroke="#1a98e8" strokeWidth="2" />
    <g fontFamily="Liberation Sans, sans-serif" fontSize="13" fill="#666">
      {[0, 1, 2, 3, 4, 5].map((i) => <text key={i} x="378" y={Math.round(1183 - i * 33.2)} textAnchor="end">{i * 50}</text>)}
      {Array.from({ length: 11 }, (_, i) => <text key={i} x={388 + i * 62} y="1203" textAnchor="middle">{i * 600}</text>)}
    </g>
  </ChartSvg>
);

/* ---------- content ---------- */

const steps = [
  "Start out along RYMER STREET, heading west.",
  "After 77 yards turn right onto DULWICH ROAD, heading north.",
  "After 99 yards turn left onto CAR PARK, heading\u00a0south.",
  "After 42 yards bear right onto BROCKWELL PARK, heading west.",
  "After 3/4 mile continue straight onto PEDESTRIAN CROSSING, heading east.",
  "After 33 yards turn left onto NORWOOD ROAD, heading north.",
  "After 9 yards bear left onto RAILTON ROAD, heading\u00a0north.",
  "You will reach your destination 150 yards along RAILTON ROAD.",
];
const topics = ["What's nearby on foot? (new!)", "Circular walks", "Themed walks", "Walking events and tours", "Walking for health", "Walking to work", "Walking to school", "Going green"];
const walks = [
  { name: "Paddington Station to Buckingham Palace", miles: "2.1 miles", km: "3.4 km", end: 86, pace: "42 mins / 192 Cal", co2: "0.69 kg" },
  { name: "Victoria Station to Covent Garden", miles: "1.7 miles", km: "2.7 km", end: 77, pace: "36 mins / 171 Cal", co2: "0.58 kg" },
];
const posts = ["Walk and Ride the Coventry Ring Road", "No Fixed Abode, a book by Charlie Carroll", "All Change at New Street Station", "Liverpool on walkit.com", "The Great British Walking Challenge"];
const partners = ["Get Walking Keep Walking East London", "Living Streets", "Walk London", "Get Walking Keep Walking South London"];
const social = [["facebook", "Become a fan"], ["tlight", "Follow us"], ["mail", "Newsletter"], ["rss", "Our blog feed"]];
const cities = [
  ["Aberdeen", "Aylesbury", "Birmingham", "Blackburn with Darwen", "Bolton", "Bristol", "Burntwood", "Burton-upon-Trent", "Bury", "Bury St Edmunds"],
  ["Cambridge", "Cannock", "Coventry", "Derby", "Dudley", "Edinburgh", "Glasgow", "High Wycombe", "Ipswich", "Kenilworth", "Leamington Spa & Warwick"],
  ["Leeds", "Leek", "Leicester", "Lichfield", "Liverpool", "London", "Lowestoft", "Luton & Dunstable", "Manchester", "Middlesbrough"],
  ["Newcastle & Gateshead", "Norwich", "Nottingham", "Nuneaton & Bedworth", "Oldham", "Perth", "Portsmouth", "Rochdale", "Rugby", "Rugeley", "Salford"],
  ["Sandwell", "Sheffield", "Solihull", "Stafford", "Stockport", "Stoke on Trent & Newcastle", "Stratford-upon-Avon", "Sunderland", "Swindon", "Tameside"],
  ["Tamworth", "Trafford", "Wakefield District", "Walsall", "Warrington", "Wigan Borough", "Wolverhampton", "York"],
];
const footerLinks = [
  { title: "About walkit.com", links: ["About", "Frequently Asked Questions", "Showcase"] },
  { title: "Community", wrap: true, links: ["Blog", "Safe walking", "Walking groups & organisations", "Themed walks", "Plot your own walk", "Walking events and tours"] },
  { title: "Get in touch", links: ["Contact", "Improvements", "Advertising & Sponsorship", "Launching in new areas", "Free flyers and posters", "Buttons and badges", "Link to us"] },
  { title: "Other information", links: ["Privacy Policy", "Terms of Use", "Subscription Terms of Use"] },
];
const stats = [
  ["0.8 miles", "13 mins (fast)", "91 Cal (fast)", "Not what you"],
  ["1.3 km", "17 mins (med)", "82 Cal (med)", "were looking for?"],
  ["1895 steps", "26 mins (slow)", "79 Cal (slow)", null],
];

function DropDown({ id, value }) {
  return (
    <SelectWrap>
      <Select id={id} defaultValue={value}>
        <option>{value}</option>
      </Select>
      <SelectArrows />
    </SelectWrap>
  );
}

export default function App() {
  return (
    <>
      <GlobalStyle />
      <CookieBar>
        This site uses cookies. By continuing to browse the site you are agreeing to our use of cookies. <a href="#cookies">Find out more here</a>
      </CookieBar>
      <Header>
        <HeaderInner>
          <LogoLink href="#home" $inset><Logo id="top" /></LogoLink>
          <NavRow>
            <Tabs>
              <Tab href="#ab" $color="#3fc8f6" $edge="#2a7ea3">A to B</Tab>
              <Tab href="#circular" $active>Circular</Tab>
              <Tab href="#plot" $color="#f5bf41" $edge="#a97d20">Plot</Tab>
              <Tab href="#nearby" $color="#ff6548" $edge="#b23a25">Nearby</Tab>
              <NewNote>
                New!
                <svg width="16" height="14" viewBox="0 0 16 14" fill="none" stroke="#ff6548" strokeWidth="1.500">
                  <path d="M1 4Q11 -2 13 11M9 9L13 12L15 8" />
                </svg>
              </NewNote>
            </Tabs>
            <MenuGroup>
              {["Home", "About", "Blog", "Link to us"].map((t) => <MenuLink key={t} href="#menu">{t}</MenuLink>)}
            </MenuGroup>
            <MenuGroup $last>
              {["FAQ", "Feedback", "Contact"].map((t) => <MenuLink key={t} href="#menu">{t}</MenuLink>)}
              <AccountTab href="#account">mywalkit</AccountTab>
              <MenuLink href="#login" $wide>Login</MenuLink>
            </MenuGroup>
          </NavRow>
        </HeaderInner>
      </Header>

      <Main as="main">
        <aside>
          <SearchForm onSubmit={(e) => e.preventDefault()}>
            <FieldLabel htmlFor="city" $h="31px">Walk in</FieldLabel>
            <DropDown id="city" value="London" />
            <FieldLabel htmlFor="from" $h="40px" $pad="4px">from</FieldLabel>
            <PlaceInput id="from" defaultValue="herne hill" />
            <FieldLabel htmlFor="time" $h="28px">for</FieldLabel>
            <DropDown id="time" value="15 minutes" />
            <FieldLabel htmlFor="pace" $h="45px">at pace</FieldLabel>
            <DropDown id="pace" value="3.0 mph (med)" />
            <GoButton type="submit">Go</GoButton>
          </SearchForm>
          <TimeBar>
            <ClockIcon />
            <span>Assuming walk starts <b>now</b>. <InlineLink href="#change">change…</InlineLink>.</span>
          </TimeBar>
          <DemoLink><a href="#demo">View our multiple circular routes demo</a></DemoLink>
          <Directions>
            {steps.map((s, i) => <Step key={s} $alt={i % 2 === 1}>{s}</Step>)}
          </Directions>
          <FeedbackLine>How are we doing? <InlineLink href="#feedback">Please give us feedback</InlineLink></FeedbackLine>
          <Panel $top="306px">
            <PanelTitle>More about walking</PanelTitle>
            <PanelBody $pad="10px 10px 5px">
              <TopicList>{topics.map((t) => <li key={t}><a href="#topic">{t}</a></li>)}</TopicList>
            </PanelBody>
          </Panel>
        </aside>

        <div>
          <StatsTable>
            <thead>
              <tr>
                <StatHead><span><DistanceIcon />Distance</span></StatHead>
                <StatHead><span><TimeIcon />Time</span></StatHead>
                <StatHead><span><HeartIcon />Calories</span></StatHead>
                <StatHead />
              </tr>
            </thead>
            <tbody>
              {stats.map((row) => (
                <tr key={row[0]}>
                  {row.map((c, i) => (
                    <StatCell key={i}>{c || <>See our <InlineLink href="#faq" $dotted>FAQ</InlineLink>.</>}</StatCell>
                  ))}
                </tr>
              ))}
            </tbody>
          </StatsTable>
          <Toolbar>
            <Tool href="#print"><PrintIcon />Print</Tool>
            <Tool href="#link"><ChainIcon />Link</Tool>
            <Tool href="#how"><NoteIcon />How are we doing?</Tool>
            <Tool href="#often" $right="6px"><HomeIcon />Walk here often?</Tool>
            <ShareLinks>
              {["google", "facebook", "twitter", "mail", "pin"].map((k) => (
                <a key={k} href="#share" aria-label={k}><SocialIcon kind={k} /></a>
              ))}
            </ShareLinks>
          </Toolbar>
          <MapFrame>
            <RouteMap />
            <Controls />
          </MapFrame>
          <ChartTitle>Hill Profile</ChartTitle>
          <HillChart />
          <ChartNote>
            This graph displays how the ground height above sea-level (metres) varies with distance along your walk (metres).<br />
            Orange sections denote particularly steep sections of the route.
          </ChartNote>
          <LowerGrid>
            <div>
              <Panel>
                <PanelTitle>Example walks</PanelTitle>
                <PanelBody $pad="10px 10px 13px">
                  {walks.map((w) => (
                    <Walk key={w.name}>
                      <p><a href="#walk"><b>{w.name}</b></a></p>
                      <p><b>{w.miles}</b> {w.km}</p>
                      <Distance end={w.end} />
                      <p>At medium pace: <b>{w.pace}</b></p>
                      <p>CO<sub>2</sub> saved (vs car): <b>{w.co2}</b></p>
                    </Walk>
                  ))}
                </PanelBody>
              </Panel>
              <Panel $top="20px">
                <PanelTitle>From the blog</PanelTitle>
                <PanelBody $pad="5px 10px 10px">
                  <BlogList>{posts.map((p) => <li key={p}><a href="#post">{p}</a></li>)}</BlogList>
                </PanelBody>
              </Panel>
            </div>
            <div>
              <Panel>
                <PanelTitle>Books</PanelTitle>
                <PanelBody $pad="25px 0 0" />
              </Panel>
              <Panel $top="20px">
                <PanelTitle>Links</PanelTitle>
                <PanelBody $pad="5px 10px 20px">
                  <LinkList>{partners.map((p) => <li key={p}><InlineLink href="#partner">{p}</InlineLink></li>)}</LinkList>
                </PanelBody>
              </Panel>
            </div>
            <div>
              <Badges>
                <a href="#ios"><AppStoreBadge /></a>
                <a href="#android"><GooglePlayBadge /></a>
              </Badges>
              <SocialList>
                {social.map(([k, t]) => <li key={k}><a href="#social"><SocialIcon kind={k} size={20} />{t}</a></li>)}
              </SocialList>
            </div>
          </LowerGrid>
        </div>
      </Main>

      <FooterBand>
        <Container>
          <CitiesTitle>Explore our cities</CitiesTitle>
          {cities.map((row) => (
            <CityRow key={row[0]}>{row.map((c) => <li key={c}><a href="#city">{c}</a></li>)}</CityRow>
          ))}
          <FooterGrid>
            {footerLinks.map((col) => (
              <FooterColumn key={col.title} $wrap={col.wrap}>
                <h3>{col.title}</h3>
                <ul>{col.links.map((l) => <li key={l}><a href="#footer">{l}</a></li>)}</ul>
              </FooterColumn>
            ))}
            <div>
              <LogoLink href="#home"><Logo id="foot" /></LogoLink>
              <MailForm onSubmit={(e) => e.preventDefault()}>
                <h3>Join our mailing list</h3>
                <MailInput aria-label="First name" defaultValue="First name" />
                <MailInput aria-label="Last name" defaultValue="Last name" />
                <MailInput aria-label="Your email" defaultValue="Your email" />
                <SendButton type="submit">Send</SendButton>
              </MailForm>
            </div>
          </FooterGrid>
        </Container>
      </FooterBand>
      <Legal>
        <Guardian href="#guardian">guardian<span>select</span></Guardian>
        <p>Copyright 2013 walkit.com. All Rights Reserved.</p>
        <p>
          Use of this site constitutes acceptance of the walkit.com <InlineLink href="#terms">Terms of Use</InlineLink> and <InlineLink href="#privacy">Privacy Policy</InlineLink>,<br />
          and where appropriate <InlineLink href="#subs">Subscription Terms of use</InlineLink>.
        </p>
      </Legal>
    </>
  );
}
